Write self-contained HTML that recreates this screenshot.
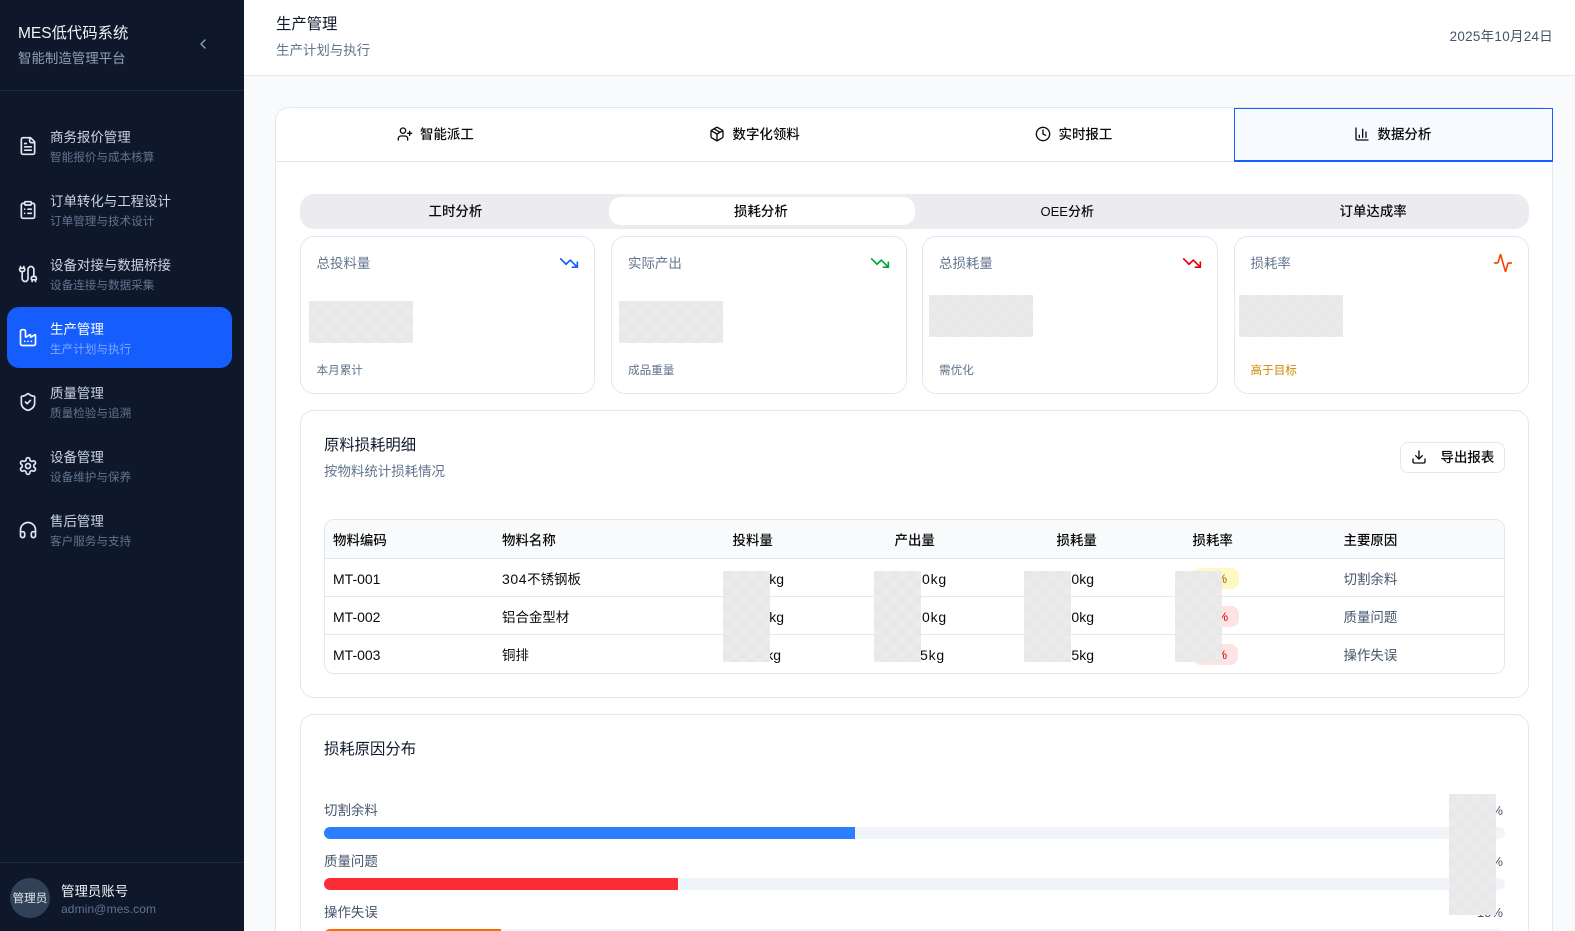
<!DOCTYPE html>
<html lang="zh-CN"><head><meta charset="utf-8"><title>MES低代码系统</title>
<style>
*{box-sizing:border-box;margin:0;padding:0}
html,body{width:1575px;height:931px;overflow:hidden;background:#f8fafc}
body{position:relative;font-family:"Liberation Sans","Noto Sans CJK SC",sans-serif;font-size:13.45px;color:#0a0a0a}
.t{position:absolute;white-space:nowrap;line-height:22px}
.b{position:absolute}
svg{position:absolute;fill:none;stroke:currentColor;stroke-width:2;stroke-linecap:round;stroke-linejoin:round}
.sb{position:absolute;left:0;top:0;width:244px;height:931px;background:#0f172b}
.m{color:#cad5e2}.s{font-size:11.6px;color:#62748e;line-height:20px}
.ph{position:absolute;background-color:#e8e8e8;background-image:conic-gradient(#ebebeb 25%,transparent 0 50%,#ebebeb 0 75%,transparent 0);background-size:16px 16px}
.card{position:absolute;background:#fff;border:1px solid #e2e8f0;border-radius:14px}
.l{color:#62748e}
.xs{font-size:11.6px;color:#62748e;line-height:20px}
.h{font-weight:500}
.line{position:absolute;left:0;width:100%;height:1px;background:#e2e8f0}
.r{color:#45556c}
.n{font-size:14px;line-height:20px}
.big{font-size:15.35px;line-height:20px}
.p{font-size:12px;line-height:20px}
</style></head><body>

<div class="sb">
<div class="b" style="left:0;top:90px;width:244px;height:1px;background:#1d293d"></div>
<div class="t big" style="left:18px;color:#f1f5f9;top:23.5px"><span style="font-size:15.5px">MES</span>低代码系统</div>
<div class="t" style="left:18px;top:48px;color:#90a1b9">智能制造管理平台</div>
<svg style="left:195px;top:36px;color:#90a1b9" width="16" height="16" viewBox="0 0 24 24"><path d="m15 18-6-6 6-6"/></svg>

<div class="b" style="left:7px;top:307px;width:225px;height:61px;background:#155dfc;border-radius:12px"></div>

<svg style="left:18px;top:135.5px;color:#e2e8f0" width="20" height="20" viewBox="0 0 24 24"><path d="M15 2H6a2 2 0 0 0-2 2v16a2 2 0 0 0 2 2h12a2 2 0 0 0 2-2V7Z"/><path d="M14 2v4a2 2 0 0 0 2 2h4"/><path d="M10 9H8"/><path d="M16 13H8"/><path d="M16 17H8"/></svg>
<div class="t m" style="left:50px;top:127px">商务报价管理</div><div class="t s" style="left:50px;top:148px">智能报价与成本核算</div>

<svg style="left:18px;top:199.5px;color:#e2e8f0" width="20" height="20" viewBox="0 0 24 24"><rect x="8" y="2" width="8" height="4" rx="1"/><path d="M16 4h2a2 2 0 0 1 2 2v14a2 2 0 0 1-2 2H6a2 2 0 0 1-2-2V6a2 2 0 0 1 2-2h2"/><path d="M12 11h4"/><path d="M12 16h4"/><path d="M8 11h.01"/><path d="M8 16h.01"/></svg>
<div class="t m" style="left:50px;top:191px">订单转化与工程设计</div><div class="t s" style="left:50px;top:212px">订单管理与技术设计</div>

<svg style="left:18px;top:263.5px;color:#e2e8f0" width="20" height="20" viewBox="0 0 24 24"><path d="M17 21v-2a1 1 0 0 1-1-1v-1a2 2 0 0 1 2-2h2a2 2 0 0 1 2 2v1a1 1 0 0 1-1 1"/><path d="M19 15V6.5a1 1 0 0 0-7 0v11a1 1 0 0 1-7 0V9"/><path d="M21 21v-2h-4"/><path d="M3 5h4V3"/><path d="M7 5a1 1 0 0 1 1 1v1a2 2 0 0 1-2 2H4a2 2 0 0 1-2-2V6a1 1 0 0 1 1-1V3"/></svg>
<div class="t m" style="left:50px;top:255px">设备对接与数据桥接</div><div class="t s" style="left:50px;top:276px">设备连接与数据采集</div>

<svg style="left:18px;top:327.5px;color:#fff" width="20" height="20" viewBox="0 0 24 24"><path d="M12 16h.01"/><path d="M16 16h.01"/><path d="M3 19a2 2 0 0 0 2 2h14a2 2 0 0 0 2-2V8.5a.5.5 0 0 0-.769-.422l-4.462 2.844A.5.5 0 0 1 15 10.5v-2a.5.5 0 0 0-.769-.422L9.77 10.922A.5.5 0 0 1 9 10.5V4a2 2 0 0 0-2-2H5a2 2 0 0 0-2 2z"/><path d="M8 16h.01"/></svg>
<div class="t" style="left:50px;top:319px;color:#fff">生产管理</div><div class="t s" style="left:50px;top:340px;color:#7fa8f8">生产计划与执行</div>

<svg style="left:18px;top:391.5px;color:#e2e8f0" width="20" height="20" viewBox="0 0 24 24"><path d="M20 13c0 5-3.5 7.5-7.66 8.95a1 1 0 0 1-.67-.01C7.5 20.5 4 18 4 13V6a1 1 0 0 1 1-1c2 0 4.5-1.2 6.24-2.72a1.17 1.17 0 0 1 1.52 0C14.51 3.81 17 5 19 5a1 1 0 0 1 1 1z"/><path d="m9 12 2 2 4-4"/></svg>
<div class="t m" style="left:50px;top:383px">质量管理</div><div class="t s" style="left:50px;top:404px">质量检验与追溯</div>

<svg style="left:18px;top:455.5px;color:#e2e8f0" width="20" height="20" viewBox="0 0 24 24"><path d="M12.22 2h-.44a2 2 0 0 0-2 2v.18a2 2 0 0 1-1 1.73l-.43.25a2 2 0 0 1-2 0l-.15-.08a2 2 0 0 0-2.73.73l-.22.38a2 2 0 0 0 .73 2.73l.15.1a2 2 0 0 1 1 1.72v.51a2 2 0 0 1-1 1.74l-.15.09a2 2 0 0 0-.73 2.73l.22.38a2 2 0 0 0 2.73.73l.15-.08a2 2 0 0 1 2 0l.43.25a2 2 0 0 1 1 1.73V20a2 2 0 0 0 2 2h.44a2 2 0 0 0 2-2v-.18a2 2 0 0 1 1-1.73l.43-.25a2 2 0 0 1 2 0l.15.08a2 2 0 0 0 2.73-.73l.22-.39a2 2 0 0 0-.73-2.73l-.15-.08a2 2 0 0 1-1-1.74v-.5a2 2 0 0 1 1-1.74l.15-.09a2 2 0 0 0 .73-2.73l-.22-.38a2 2 0 0 0-2.73-.73l-.15.08a2 2 0 0 1-2 0l-.43-.25a2 2 0 0 1-1-1.73V4a2 2 0 0 0-2-2z"/><circle cx="12" cy="12" r="3"/></svg>
<div class="t m" style="left:50px;top:447px">设备管理</div><div class="t s" style="left:50px;top:468px">设备维护与保养</div>

<svg style="left:18px;top:519.5px;color:#e2e8f0" width="20" height="20" viewBox="0 0 24 24"><path d="M3 14h3a2 2 0 0 1 2 2v3a2 2 0 0 1-2 2H5a2 2 0 0 1-2-2v-7a9 9 0 0 1 18 0v7a2 2 0 0 1-2 2h-1a2 2 0 0 1-2-2v-3a2 2 0 0 1 2-2h3"/></svg>
<div class="t m" style="left:50px;top:511px">售后管理</div><div class="t s" style="left:50px;top:532px">客户服务与支持</div>

<div class="b" style="left:0;top:862px;width:244px;height:1px;background:#1d293d"></div>
<div class="b" style="left:10px;top:878px;width:40px;height:40px;border-radius:50%;background:#314158"></div>
<div class="t s" style="left:12.5px;top:889px;color:#e2e8f0">管理员</div>
<div class="t" style="left:61px;top:881px;color:#f1f5f9">管理员账号</div>
<div class="t p" style="left:61px;top:899px;color:#62748e;letter-spacing:.12px">admin@mes.com</div>
</div>

<!-- header -->
<div class="b" style="left:244px;top:0;width:1331px;height:76px;background:#fff;border-bottom:1px solid #e2e8f0"></div>
<div class="t big" style="left:276px;color:#0f172b;top:14.5px">生产管理</div>
<div class="t" style="left:276px;top:40px;color:#62748e">生产计划与执行</div>
<div class="t" style="right:22px;top:26px;color:#45556c;letter-spacing:.3px">2025年10月24日</div>

<!-- outer card -->
<div class="b" style="left:275px;top:107px;width:1278px;height:860px;background:#fff;border:1px solid #e2e8f0;border-radius:14px"></div>
<div class="b" style="left:276px;top:161px;width:1276px;height:1px;background:#e2e8f0"></div>
<div class="b" style="left:1234px;top:108px;width:319px;height:54px;background:#f7faff;border:1px solid #155dfc;border-bottom-width:2px"></div>

<svg style="left:397px;top:126px" width="16" height="16" viewBox="0 0 24 24"><path d="M16 21v-2a4 4 0 0 0-4-4H6a4 4 0 0 0-4 4v2"/><circle cx="9" cy="7" r="4"/><path d="M19 8v6"/><path d="M22 11h-6"/></svg>
<div class="t h" style="left:420px;top:124px">智能派工</div>
<svg style="left:709px;top:126px" width="16" height="16" viewBox="0 0 24 24"><path d="M11 21.73a2 2 0 0 0 2 0l7-4A2 2 0 0 0 21 16V8a2 2 0 0 0-1-1.73l-7-4a2 2 0 0 0-2 0l-7 4A2 2 0 0 0 3 8v8a2 2 0 0 0 1 1.73z"/><path d="M12 22V12"/><path d="M3.29 7 12 12l8.71-5"/><path d="m7.5 4.27 9 5.15"/></svg>
<div class="t h" style="left:732.5px;top:124px">数字化领料</div>
<svg style="left:1035px;top:126px" width="16" height="16" viewBox="0 0 24 24"><circle cx="12" cy="12" r="10"/><path d="M12 6v6l4 2"/></svg>
<div class="t h" style="left:1058.5px;top:124px">实时报工</div>
<svg style="left:1354px;top:126px" width="16" height="16" viewBox="0 0 24 24"><path d="M3 3v16a2 2 0 0 0 2 2h16"/><path d="M18 17V9"/><path d="M13 17V5"/><path d="M8 17v-3"/></svg>
<div class="t h" style="left:1377.5px;top:124px">数据分析</div>

<!-- sub tabs -->
<div class="b" style="left:299.5px;top:193.5px;width:1229.5px;height:35.5px;background:#ececf0;border-radius:14px"></div>
<div class="b" style="left:609px;top:197px;width:306px;height:28px;background:#fff;border-radius:12px"></div>
<div class="t h" style="left:428.5px;top:201px">工时分析</div>
<div class="t h" style="left:734px;top:201px">损耗分析</div>
<div class="t h" style="left:1040.5px;top:201px;font-size:13px">OEE分析</div>
<div class="t h" style="left:1339.5px;top:201px">订单达成率</div>

<!-- stat cards -->
<div class="card" style="left:299.5px;top:236px;width:295.5px;height:158px"></div>
<div class="card" style="left:611px;top:236px;width:296px;height:158px"></div>
<div class="card" style="left:922px;top:236px;width:296px;height:158px"></div>
<div class="card" style="left:1234px;top:236px;width:295px;height:158px"></div>
<div class="t l" style="left:316.5px;top:253px">总投料量</div>
<div class="t l" style="left:628px;top:253px">实际产出</div>
<div class="t l" style="left:939px;top:253px">总损耗量</div>
<div class="t l" style="left:1250.5px;top:253px">损耗率</div>
<svg style="left:559px;top:253px;color:#155dfc" width="20" height="20" viewBox="0 0 24 24"><path d="m22 17-8.5-8.5-5 5L2 7"/><path d="M16 17h6v-6"/></svg>
<svg style="left:870px;top:253px;color:#00a63e" width="20" height="20" viewBox="0 0 24 24"><path d="m22 17-8.5-8.5-5 5L2 7"/><path d="M16 17h6v-6"/></svg>
<svg style="left:1182px;top:253px;color:#e7000b" width="20" height="20" viewBox="0 0 24 24"><path d="m22 17-8.5-8.5-5 5L2 7"/><path d="M16 17h6v-6"/></svg>
<svg style="left:1493px;top:253px;color:#f54900" width="20" height="20" viewBox="0 0 24 24"><path d="M22 12h-2.48a2 2 0 0 0-1.93 1.46l-2.35 8.36a.25.25 0 0 1-.48 0L9.24 2.18a.25.25 0 0 0-.48 0l-2.35 8.36A2 2 0 0 1 4.49 12H2"/></svg>
<div class="ph" style="left:309px;top:301px;width:104px;height:42px"></div>
<div class="ph" style="left:619px;top:301px;width:104px;height:42px"></div>
<div class="ph" style="left:929px;top:295px;width:104px;height:42px"></div>
<div class="ph" style="left:1239px;top:295px;width:104px;height:42px"></div>
<div class="t xs" style="left:316.5px;top:360.5px">本月累计</div>
<div class="t xs" style="left:628px;top:360.5px">成品重量</div>
<div class="t xs" style="left:939px;top:360.5px">需优化</div>
<div class="t xs" style="left:1250.5px;top:360.5px;color:#d08700">高于目标</div>

<!-- detail panel -->
<div class="card" style="left:299.5px;top:410px;width:1229.5px;height:288px"></div>
<div class="t big" style="left:324px;color:#0f172b;top:436px">原料损耗明细</div>
<div class="t l" style="left:324px;top:461px">按物料统计损耗情况</div>
<div class="b" style="left:1400px;top:442px;width:105px;height:31px;border:1px solid #e2e8f0;border-radius:8px;background:#fff"></div>
<svg style="left:1411px;top:449px" width="16" height="16" viewBox="0 0 24 24"><path d="M21 15v4a2 2 0 0 1-2 2H5a2 2 0 0 1-2-2v-4"/><path d="m7 10 5 5 5-5"/><path d="M12 15V3"/></svg>
<div class="t h" style="left:1440.5px;top:447px">导出报表</div>

<div class="b" style="left:324px;top:519px;width:1181px;height:155px;border:1px solid #e2e8f0;border-radius:10px;overflow:hidden;background:#fff">
<div class="b" style="left:0;top:0;width:100%;height:39px;background:#f8fafc;border-bottom:1px solid #e2e8f0"></div>
<div class="line" style="top:76px"></div>
<div class="line" style="top:114px"></div>
</div>
<div class="t h" style="left:333px;top:530px">物料编码</div>
<div class="t h" style="left:502px;top:530px">物料名称</div>
<div class="t h" style="left:732.5px;top:530px">投料量</div>
<div class="t h" style="left:894.5px;top:530px">产出量</div>
<div class="t h" style="left:1056.5px;top:530px">损耗量</div>
<div class="t h" style="left:1192.5px;top:530px">损耗率</div>
<div class="t h" style="left:1343.5px;top:530px">主要原因</div>

<div class="t n" style="left:333px;top:569px">MT-001</div><div class="t" style="left:502px;top:569px;line-height:20px"><span class="n" style="letter-spacing:.6px">304</span>不锈钢板</div>
<div class="t n" style="left:333px;top:607px">MT-002</div><div class="t" style="left:502px;top:607px">铝合金型材</div>
<div class="t n" style="left:333px;top:645px">MT-003</div><div class="t" style="left:502px;top:645px">铜排</div>

<div class="t n" style="right:791px;top:569px">1,250kg</div>
<div class="t n" style="right:791px;top:607px">1,100kg</div>
<div class="t n" style="right:794px;top:645px">2,000kg</div>
<div class="t n" style="right:628px;top:569px;letter-spacing:.8px">1,150kg</div>
<div class="t n" style="right:628px;top:607px;letter-spacing:.8px">1,020kg</div>
<div class="t n" style="right:630px;top:645px;letter-spacing:.8px">1,855kg</div>
<div class="t n" style="right:481px;top:569px">100kg</div>
<div class="t n" style="right:481px;top:607px">80kg</div>
<div class="t n" style="right:481px;top:645px">145kg</div>

<div class="b" style="left:1193px;top:568px;width:46px;height:21px;border-radius:8px;background:#fef9c2"></div>
<div class="b" style="left:1193px;top:606px;width:46px;height:21px;border-radius:8px;background:#ffe2e2"></div>
<div class="b" style="left:1193px;top:644px;width:45px;height:21px;border-radius:8px;background:#ffe2e2"></div>
<div class="t p" style="right:348px;top:569px;color:#a65f00">8.0%</div>
<div class="t p" style="right:347px;top:607px;color:#c10007">7.3%</div>
<div class="t p" style="right:348px;top:645px;color:#c10007">7.2%</div>
<div class="t r" style="left:1343.5px;top:569px">切割余料</div>
<div class="t r" style="left:1343.5px;top:607px">质量问题</div>
<div class="t r" style="left:1343.5px;top:645px">操作失误</div>

<div class="ph" style="left:723px;top:571px;width:47px;height:91px"></div>
<div class="ph" style="left:874px;top:571px;width:47px;height:91px"></div>
<div class="ph" style="left:1024px;top:571px;width:47px;height:91px"></div>
<div class="ph" style="left:1175px;top:571px;width:47px;height:91px"></div>

<!-- reason panel -->
<div class="card" style="left:299.5px;top:714px;width:1229.5px;height:260px"></div>
<div class="t big" style="left:324px;top:740px;color:#0f172b">损耗原因分布</div>
<div class="t r" style="left:324px;top:800px">切割余料</div>
<div class="t r" style="right:72px;top:800px;font-size:13px">45%</div>
<div class="b" style="left:324px;top:827px;width:1181px;height:12px;border-radius:6px;background:#f1f5f9;overflow:hidden"><div class="b" style="left:0;top:0;width:531px;height:12px;background:#2b7fff"></div></div>
<div class="t r" style="left:324px;top:851px">质量问题</div>
<div class="t r" style="right:72px;top:851px;font-size:13px">30%</div>
<div class="b" style="left:324px;top:878px;width:1181px;height:12px;border-radius:6px;background:#f1f5f9;overflow:hidden"><div class="b" style="left:0;top:0;width:354px;height:12px;background:#fb2c36"></div></div>
<div class="t r" style="left:324px;top:902px">操作失误</div>
<div class="t r" style="right:72px;top:902px;font-size:13px">15%</div>
<div class="b" style="left:324px;top:929px;width:1181px;height:12px;border-radius:6px;background:#f1f5f9;overflow:hidden"><div class="b" style="left:0;top:0;width:177px;height:12px;background:#ff6900"></div></div>
<div class="ph" style="left:1449px;top:794px;width:47px;height:121px"></div>
</body></html>
